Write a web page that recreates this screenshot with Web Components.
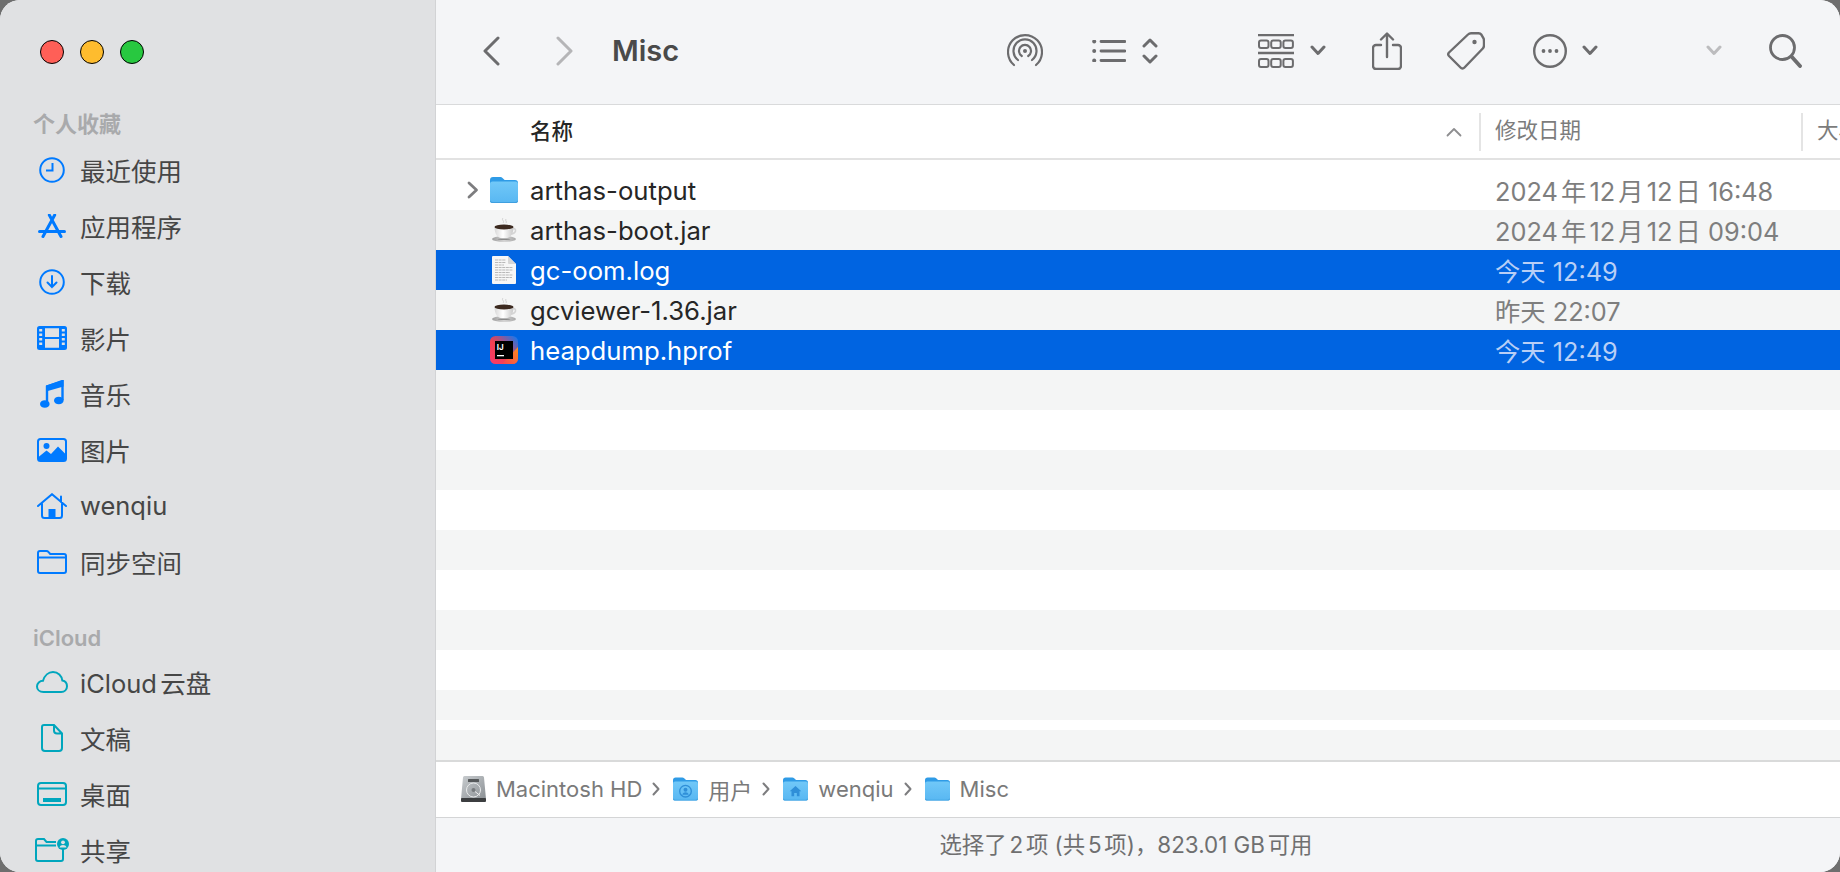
<!DOCTYPE html>
<html lang="zh">
<head>
<meta charset="utf-8">
<title>Misc</title>
<style>
  html, body { margin: 0; height: 100%; overflow: hidden; background: #6e6e6e; }
  body { font-family: Inter, "Noto Sans CJK SC", sans-serif; text-autospace: normal; }
</style>
</head>
<body>
<finder-window>
  <finder-sidebar slot="sidebar">
    <side-heading>个人收藏</side-heading>
    <side-item><finder-icon slot="icon" name="clock"></finder-icon>最近使用</side-item>
    <side-item><finder-icon slot="icon" name="apps"></finder-icon>应用程序</side-item>
    <side-item><finder-icon slot="icon" name="download"></finder-icon>下载</side-item>
    <side-item><finder-icon slot="icon" name="film"></finder-icon>影片</side-item>
    <side-item><finder-icon slot="icon" name="music"></finder-icon>音乐</side-item>
    <side-item><finder-icon slot="icon" name="photo"></finder-icon>图片</side-item>
    <side-item><finder-icon slot="icon" name="home"></finder-icon>wenqiu</side-item>
    <side-item><finder-icon slot="icon" name="sync"></finder-icon>同步空间</side-item>
    <side-heading second>iCloud</side-heading>
    <side-item><finder-icon slot="icon" name="cloud"></finder-icon>iCloud云盘</side-item>
    <side-item><finder-icon slot="icon" name="doc"></finder-icon>文稿</side-item>
    <side-item><finder-icon slot="icon" name="desktop"></finder-icon>桌面</side-item>
    <side-item><finder-icon slot="icon" name="shared"></finder-icon>共享</side-item>
  </finder-sidebar>

  <finder-toolbar slot="toolbar" title-text="Misc"></finder-toolbar>
  <list-header slot="content"></list-header>
  <file-list slot="content">
    <file-row height="40">
      <finder-icon slot="disclosure" name="disclosure"></finder-icon>
      <finder-icon slot="icon" name="folder"></finder-icon>
      <span slot="name">arthas-output</span>
      <span slot="date">2024年12月12日 16:48</span>
    </file-row>
    <file-row alt>
      <finder-icon slot="icon" name="cup"></finder-icon>
      <span slot="name">arthas-boot.jar</span>
      <span slot="date">2024年12月12日 09:04</span>
    </file-row>
    <file-row selected>
      <finder-icon slot="icon" name="log"></finder-icon>
      <span slot="name">gc-oom.log</span>
      <span slot="date">今天 12:49</span>
    </file-row>
    <file-row alt>
      <finder-icon slot="icon" name="cup"></finder-icon>
      <span slot="name">gcviewer-1.36.jar</span>
      <span slot="date">昨天 22:07</span>
    </file-row>
    <file-row selected>
      <finder-icon slot="icon" name="idea"></finder-icon>
      <span slot="name">heapdump.hprof</span>
      <span slot="date">今天 12:49</span>
    </file-row>
    <file-row alt></file-row>
    <file-row></file-row>
    <file-row alt></file-row>
    <file-row></file-row>
    <file-row alt></file-row>
    <file-row></file-row>
    <file-row alt></file-row>
    <file-row></file-row>
    <file-row alt height="30"></file-row>
    <file-row height="10"></file-row>
    <file-row alt height="30"></file-row>
  </file-list>
  <path-bar slot="content">
    <path-crumb><finder-icon slot="icon" name="drive"></finder-icon>Macintosh HD</path-crumb>
    <path-crumb><finder-icon slot="icon" name="crumbUser"></finder-icon>用户</path-crumb>
    <path-crumb><finder-icon slot="icon" name="crumbHome"></finder-icon>wenqiu</path-crumb>
    <path-crumb last><finder-icon slot="icon" name="crumbFolder"></finder-icon>Misc</path-crumb>
  </path-bar>
  <status-bar slot="content">选择了2项 (共5项)，823.01 GB可用</status-bar>
</finder-window>

<script>
'use strict'

const BLUE = '#007aff';
const TEAL = '#00a6bd';
const GREY = '#6c6c6e';

// Carpeta azul de Finder; el glifo va encima para las variantes de la barra de ruta.
const blueFolder = (w, h, glyph = '') => `
  <svg width="${w}" height="${h}" viewBox="0 0 28 26">
    <defs><linearGradient id="f" x1="0" y1="0" x2="0" y2="1"><stop offset="0" stop-color="#71c8f8"/><stop offset="1" stop-color="#58b7f2"/></linearGradient></defs>
    <path d="M0 3a3 3 0 0 1 3-3h7.5c.8 0 1.4.3 2 .9L14.600 3H25a3 3 0 0 1 3 3v4H0z" fill="#2f9be6"/>
    <path d="M0 7a2.500 2.500 0 0 1 2.500-2.500h23A2.500 2.500 0 0 1 28 7v16a3 3 0 0 1-3 3H3a3 3 0 0 1-3-3z" fill="url(#f)"/>
    <path d="M0 24.500V23a3 3 0 0 0 3 2h22a3 3 0 0 0 3-2v1.500a2 2 0 0 1-2 1.500H2a2 2 0 0 1-2-1.500z" fill="#3f9fdf"/>
    ${glyph}
  </svg>`;

// Iconos dibujados a mano en píxeles del original
const ICONS = {
  clock: `<svg width="26" height="26" viewBox="0 0 26 26" fill="none" stroke="${BLUE}" stroke-width="2"><circle cx="13" cy="13" r="11.800"/><path d="M13.500 6v7.500H7"/></svg>`,
  apps: `<svg width="28" height="24" viewBox="0 0 28 24" fill="none" stroke="${BLUE}" stroke-linecap="round"><path d="M11.300 1L23 22.500M16.700 1L5 22.500" stroke-width="3"/><path d="M1.500 17.500h25" stroke-width="3"/></svg>`,
  download: `<svg width="26" height="26" viewBox="0 0 26 26" fill="none" stroke="${BLUE}" stroke-width="2"><circle cx="13" cy="13" r="11.800"/><path d="M13 7v11M8.500 13.500l4.500 4.500 4.500-4.500" stroke-linecap="round"/></svg>`,
  film: `<svg width="30" height="24" viewBox="0 0 30 24"><rect width="30" height="24" rx="2.500" fill="${BLUE}"/><path d="M8 2.200h14v8.800H8zM8 13h14v8.800H8z" fill="#e0e1e3"/><path d="M2.200 3h3v2.500h-3zM2.200 7.500h3V10h-3zM2.200 12h3v2.500h-3zM2.200 16.500h3V19h-3zM24.800 3h3v2.500h-3zM24.800 7.500h3V10h-3zM24.800 12h3v2.500h-3zM24.800 16.500h3V19h-3z" fill="#e0e1e3"/></svg>`,
  music: `<svg width="24" height="28" viewBox="0 0 24 28"><path d="M7 24V6.500L22.500 1v19" fill="none" stroke="${BLUE}" stroke-width="2.400"/><path d="M6 5.500L23.500 0v6.500L6 11.500z" fill="${BLUE}"/><ellipse cx="4.800" cy="24" rx="4.800" ry="3.800" fill="${BLUE}"/><ellipse cx="18.800" cy="20.500" rx="4.800" ry="3.800" fill="${BLUE}"/></svg>`,
  photo: `<svg width="30" height="24" viewBox="0 0 30 24"><rect x="1" y="1" width="28" height="22" rx="2.500" fill="none" stroke="${BLUE}" stroke-width="2"/><circle cx="9.500" cy="8" r="3" fill="${BLUE}"/><path d="M1.500 19l8-6.500 4.500 3.500 7-7.500 7.500 7.500V23h-27z" fill="${BLUE}"/></svg>`,
  home: `<svg width="30" height="26" viewBox="0 0 30 26" fill="none" stroke="${BLUE}" stroke-width="2" stroke-linecap="round"><path d="M1 13L15 1.200 29 13M24 3.500v5.500M5 10.500V22.500a2.500 2.500 0 0 0 2.500 2.500h15a2.500 2.500 0 0 0 2.500-2.500V10.500"/><rect x="11.500" y="16" width="7" height="9" fill="${BLUE}" stroke="none"/></svg>`,
  sync: `<svg width="30" height="24" viewBox="0 0 30 24" fill="none" stroke="${BLUE}" stroke-width="2"><path d="M1 6.500V3a2 2 0 0 1 2-2h6.500c.9 0 1.500.4 2.100 1.100L13.200 4H27a2 2 0 0 1 2 2v15a2 2 0 0 1-2 2H3a2 2 0 0 1-2-2zM1 7.500h28"/></svg>`,
  cloud: `<svg width="32" height="22" viewBox="0 0 32 22" fill="none" stroke="${TEAL}" stroke-width="2"><path d="M7.500 21C3.500 21 1 18.500 1 15.500 1 12.200 3.700 9.800 7 9.800 8.500 4.500 12.500 1 17 1c5 0 8.800 3.600 9.300 8.500 2.800.6 4.700 3 4.700 5.800 0 3.300-2.500 5.700-5.800 5.700z"/></svg>`,
  doc: `<svg width="22" height="28" viewBox="0 0 22 28" fill="none" stroke="${TEAL}" stroke-width="2"><path d="M3 1h10l8 8.500V24a3 3 0 0 1-3 3H4a3 3 0 0 1-3-3V3a2 2 0 0 1 2-2zM13 1v5.500a3 3 0 0 0 3 3h5"/></svg>`,
  desktop: `<svg width="30" height="24" viewBox="0 0 30 24"><rect x="1" y="1" width="28" height="22" rx="3" fill="none" stroke="${TEAL}" stroke-width="2"/><path d="M1 6.500h28" stroke="${TEAL}" stroke-width="2"/><rect x="6" y="16" width="18" height="4" fill="${TEAL}"/></svg>`,
  shared: `<svg width="34" height="24" viewBox="0 0 34 24"><path d="M28 11v10a2 2 0 0 1-2 2H3a2 2 0 0 1-2-2V3a2 2 0 0 1 2-2h6l2.500 3H21M1 7.500h20" fill="none" stroke="${TEAL}" stroke-width="2"/><circle cx="28" cy="6" r="6" fill="${TEAL}"/><circle cx="28" cy="4.300" r="1.900" fill="#e0e1e3"/><path d="M24.500 9.500c.5-1.800 2-2.500 3.500-2.500s3 .7 3.500 2.500z" fill="#e0e1e3"/></svg>`,

  back: `<svg width="18" height="30" viewBox="0 0 18 30" fill="none" stroke="${GREY}" stroke-width="3" stroke-linecap="round" stroke-linejoin="round"><path d="M16 2L3 15l13 13"/></svg>`,
  forward: `<svg width="18" height="30" viewBox="0 0 18 30" fill="none" stroke="#b5b5b7" stroke-width="3" stroke-linecap="round" stroke-linejoin="round"><path d="M2 2l13 13L2 28"/></svg>`,
  airdrop: `<svg width="36" height="36" viewBox="0 0 36 36" fill="none" stroke="${GREY}" stroke-width="2.200" stroke-linecap="round"><path d="M7 32A17 17 0 1 1 29 32M11 27A11.500 11.500 0 1 1 25 27M14.800 23A6 6 0 1 1 21.200 23"/><circle cx="18" cy="18" r="2" fill="${GREY}" stroke="none"/></svg>`,
  list: `<svg width="34" height="22" viewBox="0 0 34 22" fill="none" stroke="${GREY}" stroke-width="2.800" stroke-linecap="round"><path d="M9 1.500h24M9 11h24M9 20.500h24"/><g fill="${GREY}" stroke="none"><circle cx="2.200" cy="1.500" r="2"/><circle cx="2.200" cy="11" r="2"/><circle cx="2.200" cy="20.500" r="2"/></g></svg>`,
  updown: `<svg width="16" height="26" viewBox="0 0 16 26" fill="none" stroke="${GREY}" stroke-width="3" stroke-linecap="round" stroke-linejoin="round"><path d="M2 8l6-6 6 6M2 18l6 6 6-6"/></svg>`,
  grid: `<svg width="36" height="34" viewBox="0 0 36 34" fill="none" stroke="${GREY}" stroke-width="2"><path d="M0 1h36M0 19h36" stroke-width="2.400"/><rect x="1" y="6.500" width="9.500" height="7.500" rx="2"/><rect x="13.200" y="6.500" width="9.500" height="7.500" rx="2"/><rect x="25.400" y="6.500" width="9.500" height="7.500" rx="2"/><rect x="1" y="25" width="9.500" height="8" rx="2"/><rect x="13.200" y="25" width="9.500" height="8" rx="2"/><rect x="25.400" y="25" width="9.500" height="8" rx="2"/></svg>`,
  chevron: `<svg width="16" height="11" viewBox="0 0 16 11" fill="none" stroke="${GREY}" stroke-width="3" stroke-linecap="round" stroke-linejoin="round"><path d="M2 2l6 6.500L14 2"/></svg>`,
  chevronOff: `<svg width="16" height="11" viewBox="0 0 16 11" fill="none" stroke="#bcbcbe" stroke-width="3" stroke-linecap="round" stroke-linejoin="round"><path d="M2 2l6 6.500L14 2"/></svg>`,
  share: `<svg width="30" height="38" viewBox="0 0 30 38" fill="none" stroke="${GREY}" stroke-width="2.400" stroke-linecap="round" stroke-linejoin="round"><path d="M9 13H4a3 3 0 0 0-3 3v18a3 3 0 0 0 3 3h22a3 3 0 0 0 3-3V16a3 3 0 0 0-3-3h-5M15 25V2M9 7.500l6-6 6 6"/></svg>`,
  tag: `<svg width="38" height="38" viewBox="0 0 38 38" fill="none" stroke="${GREY}" stroke-width="2.400" stroke-linejoin="round"><path d="M2 20.500L21 2.500c.8-.8 1.600-1.300 3-1.300h7.500c1.500 0 2.300.6 3 1.600l2 3.500c.5 1 .5 1.600.5 3v4c0 1.200-.3 2.300-1.200 3.200L17.500 35.500c-1.300 1.400-2.800 1.400-4 0L2 24c-1-1.100-1-2.400 0-3.500z"/><circle cx="27.500" cy="10" r="2.200" fill="${GREY}" stroke="none"/></svg>`,
  more: `<svg width="34" height="34" viewBox="0 0 34 34"><circle cx="17" cy="17" r="15.800" fill="none" stroke="${GREY}" stroke-width="2.400"/><g fill="${GREY}"><circle cx="10.500" cy="17" r="1.900"/><circle cx="17" cy="17" r="1.900"/><circle cx="23.500" cy="17" r="1.900"/></g></svg>`,
  search: `<svg width="33" height="34" viewBox="0 0 33 34" fill="none" stroke="${GREY}" stroke-linecap="round"><circle cx="13.500" cy="13.500" r="12" stroke-width="2.800"/><path d="M22.500 22.500L31 32" stroke-width="3.800"/></svg>`,
  sortUp: `<svg width="16" height="10" viewBox="0 0 16 10" fill="none" stroke="#8e8e90" stroke-width="1.800" stroke-linecap="round" stroke-linejoin="round"><path d="M1.500 8.500L8 2l6.500 6.500"/></svg>`,
  disclosure: `<svg width="14" height="18" viewBox="0 0 14 18" fill="none" stroke="#7d7d7f" stroke-width="2.800" stroke-linecap="round" stroke-linejoin="round"><path d="M3 2l7.500 7L3 16"/></svg>`,

  folder: blueFolder(28, 26),
  cup: `<svg width="26" height="26" viewBox="0 0 26 26">
    <defs>
      <linearGradient id="c" x1="0" y1="0" x2="1" y2="0"><stop offset="0" stop-color="#d8d8d8"/><stop offset=".45" stop-color="#fff"/><stop offset="1" stop-color="#c8c8c8"/></linearGradient>
      <linearGradient id="s" x1="0" y1="0" x2="1" y2="0"><stop offset="0" stop-color="#9d9d9d"/><stop offset=".5" stop-color="#d4d4d4"/><stop offset="1" stop-color="#a8a8a8"/></linearGradient>
    </defs>
    <path d="M12 1c-2 2 2 3 0 5M15 2c-1.500 1.500 1.500 2.500 0 4" fill="none" stroke="#d2d2d2" stroke-width="1"/>
    <ellipse cx="13" cy="22" rx="12" ry="3" fill="url(#s)"/>
    <path d="M20 12c3-1.500 5 0 4.500 2-.4 1.800-3 3-6 3" fill="none" stroke="#d4d4d4" stroke-width="1.600"/>
    <path d="M3.500 10c0 7 3 11.500 9.500 11.500S22.500 17 22.500 10z" fill="url(#c)"/>
    <ellipse cx="13" cy="10" rx="9.500" ry="2.400" fill="#3c2a20"/>
    <ellipse cx="13" cy="22.300" rx="6.500" ry=".8" fill="#8a8a8a"/>
  </svg>`,
  log: `<svg width="24" height="28" viewBox="0 0 24 28">
    <path d="M0 1a1 1 0 0 1 1-1h15l8 8v19a1 1 0 0 1-1 1H1a1 1 0 0 1-1-1z" fill="#f6f6f6"/>
    <path d="M16 0l8 8h-7a1 1 0 0 1-1-1z" fill="#d6d6d6"/>
    <path d="M3 4h11M3 6.500h11M3 9h9M3 11.500h18M3 14h18M3 16.500h15M3 19h18M3 21.500h17M3 24h12" stroke="#b8b8b8" stroke-width="1" stroke-dasharray="3 .6"/>
  </svg>`,
  idea: `<svg width="28" height="28" viewBox="0 0 28 28">
    <defs>
      <linearGradient id="i" x1="0" y1="1" x2="1" y2="0"><stop offset="0" stop-color="#fd3a6b"/><stop offset=".45" stop-color="#f0404f"/><stop offset="1" stop-color="#087cfa"/></linearGradient>
      <linearGradient id="o" x1="0" y1="1" x2="1" y2="0"><stop offset="0" stop-color="#f9414f"/><stop offset="1" stop-color="#fd8d1e"/></linearGradient>
    </defs>
    <rect width="28" height="28" rx="5.500" fill="url(#i)"/>
    <path d="M28 11v11.500a5.500 5.500 0 0 1-5.500 5.500H12z" fill="url(#o)"/>
    <rect x="5" y="5" width="18" height="18" fill="#000"/>
    <text x="6.800" y="13.500" font-family="Inter, sans-serif" font-size="8" font-weight="700" fill="#fff">IJ</text>
    <rect x="7" y="19" width="7" height="1.300" fill="#fff"/>
  </svg>`,
  drive: `<svg width="25" height="26" viewBox="0 0 25 26">
    <defs><linearGradient id="d" x1="0" y1="0" x2="1" y2="1"><stop offset="0" stop-color="#c9cdd0"/><stop offset="1" stop-color="#8b9094"/></linearGradient></defs>
    <path d="M2 1.500A1.500 1.500 0 0 1 3.500 0h18A1.500 1.500 0 0 1 23 1.500L25 23H0z" fill="url(#d)"/>
    <rect x="0" y="22" width="25" height="4" rx="1" fill="#3c3e40"/>
    <rect x="7" y="3" width="11" height="3" rx=".5" fill="#55585a"/>
    <circle cx="12.500" cy="14" r="7" fill="none" stroke="#e8eaeb" stroke-width="1"/>
    <circle cx="12.500" cy="14" r="2" fill="#777b7e"/>
    <path d="M14 15.500l5 4" stroke="#eee" stroke-width="1"/>
  </svg>`,
  crumbUser: blueFolder(25, 24, `<circle cx="14" cy="15.500" r="6.500" fill="none" stroke="#2f8fd8" stroke-width="1.500"/><circle cx="14" cy="13.800" r="2.200" fill="#2f8fd8"/><path d="M10.500 19.500c.6-2 2-2.800 3.500-2.800s2.900.8 3.500 2.800z" fill="#2f8fd8"/>`),
  crumbHome: blueFolder(25, 24, `<path d="M14 9.500l6.500 6h-2v5.500h-3v-3.500h-3V21h-3v-5.500h-2z" fill="#2f8fd8"/>`),
  crumbFolder: blueFolder(25, 24)
};

// Elemento base: monta el shadow root con el marcado que devuelve template()
class FinderElement extends HTMLElement {
    constructor() {
        super();
        this.attachShadow({ mode: 'open' });
    }

    connectedCallback() {
        this.shadowRoot.innerHTML = this.template();
    }
}

class FinderIcon extends FinderElement {
    template() {
        return `<style>:host { display: inline-flex; flex: none; line-height: 0; } svg { display: block; }</style>${ICONS[this.getAttribute('name')] || ''}`;
    }
}

class FinderWindow extends FinderElement {
    template() {
        return `
        <style>
            :host {
                display: grid;
                grid-template-columns: 436px 1fr;
                grid-template-rows: 105px 1fr;
                height: 872px;
                border-radius: 20px;
                overflow: hidden;
                background: #f4f5f7;
            }
            ::slotted([slot=sidebar]) { grid-row: 1 / 3; }
            main { display: flex; flex-direction: column; min-height: 0; min-width: 0; }
        </style>
        <slot name="sidebar"></slot>
        <slot name="toolbar"></slot>
        <main><slot name="content"></slot></main>`;
    }
}

class FinderSidebar extends FinderElement {
    template() {
        return `
        <style>
            :host {
                display: block;
                box-sizing: border-box;
                background: #e0e1e3;
                border-right: 1px solid #d2d3d5;
                padding: 40px 0 0 28px;
                overflow: hidden;
            }
            .lights { display: flex; gap: 16px; margin-left: 12px; margin-bottom: 45px; }
            .lights span { width: 24px; height: 24px; border-radius: 50%; box-sizing: border-box; border: 1px solid; }
            .close { background: #ff5f57; border-color: #e0443e; }
            .min { background: #febc2e; border-color: #dea123; }
            .max { background: #28c840; border-color: #1fab34; }
        </style>
        <div class="lights"><span class="close"></span><span class="min"></span><span class="max"></span></div>
        <slot></slot>`;
    }
}

class SideHeading extends FinderElement {
    template() {
        return `
        <style>
            :host {
                display: block;
                height: 30px;
                line-height: 30px;
                margin: 0 0 3px 5px;
                font-size: 22px;
                font-weight: 600;
                color: #a9aaac;
            }
            :host([second]) { margin-top: 33px; margin-bottom: 1px; }
        </style>
        <slot></slot>`;
    }
}

class SideItem extends FinderElement {
    template() {
        return `
        <style>
            :host {
                display: flex;
                align-items: center;
                height: 56px;
                font-size: 25.500px;
                color: #464646;
                white-space: nowrap;
            }
            .icon { width: 48px; margin-right: 4px; display: flex; justify-content: center; flex: none; }
            .label { padding-bottom: 1px; }
        </style>
        <div class="icon"><slot name="icon"></slot></div>
        <div class="label"><slot></slot></div>`;
    }
}

class FinderToolbar extends FinderElement {
    template() {
        // Cada entrada: icono y margen izquierdo hasta el anterior
        const tools = [
            ['airdrop', 0], ['list', 49], ['updown', 16], ['grid', 100], ['chevron', 16], ['share', 46],
            ['tag', 45], ['more', 48], ['chevron', 15], ['chevronOff', 108], ['search', 47]
        ];
        const items = tools.map(([name, gap]) => `<finder-icon name="${name}" style="margin-left:${gap}px"></finder-icon>`).join('');
        return `
        <style>
            :host {
                display: flex;
                align-items: center;
                box-sizing: border-box;
                height: 105px;
                padding: 0 0 3px 46px;
                background: #f4f5f7;
                border-bottom: 1px solid #d9dadb;
                overflow: hidden;
            }
            .nav { display: flex; gap: 56px; }
            h1 {
                margin: 0 0 0 38px;
                flex: 0 0 395px;
                font-size: 29px;
                font-weight: 600;
                color: #4a4a4a;
            }
        </style>
        <div class="nav"><finder-icon name="back"></finder-icon><finder-icon name="forward"></finder-icon></div>
        <h1>${this.getAttribute('title-text')}</h1>
        ${items}`;
    }
}

class ListHeader extends FinderElement {
    template() {
        return `
        <style>
            :host {
                display: grid;
                grid-template-columns: 1043px 322px 1fr;
                align-items: center;
                box-sizing: border-box;
                height: 55px;
                flex: none;
                background: #fff;
                border-bottom: 2px solid #e2e2e2;
                font-size: 21.500px;
                color: #7c7c7c;
                overflow: hidden;
                white-space: nowrap;
            }
            .name { display: flex; align-items: center; justify-content: space-between; padding: 0 17px 0 94px; }
            .name b { font-weight: 500; color: #262626; margin-bottom: 4px; }
            .col { height: 38px; line-height: 34px; border-left: 2px solid #e4e4e4; padding-left: 14px; }
        </style>
        <div class="name"><b>名称</b><finder-icon name="sortUp"></finder-icon></div>
        <div class="col">修改日期</div>
        <div class="col">大小</div>`;
    }
}

class FileList extends FinderElement {
    template() {
        return `
        <style>
            :host { display: block; flex: 1; min-height: 0; padding-top: 10px; background: #fff; overflow: hidden; }
        </style>
        <slot></slot>`;
    }
}

class FileRow extends FinderElement {
    template() {
        const height = this.getAttribute('height') || 40;
        return `
        <style>
            :host {
                display: grid;
                grid-template-columns: 54px 40px 965px 1fr;
                align-items: center;
                height: ${height}px;
                font-size: 25.700px;
                color: #262626;
                white-space: nowrap;
            }
            :host([alt]) { background: #f4f5f5; }
            :host([selected]) { background: #0064e1; color: #fff; }
            .disclosure { padding-left: 30px; display: flex; }
            .icon { display: flex; width: 28px; justify-content: center; }
            .date { color: #7e7e7e; font-size: 25.300px; padding-bottom: 1px; }
            :host([selected]) .date { color: #b9cff6; }
        </style>
        <div class="disclosure"><slot name="disclosure"></slot></div>
        <div class="icon"><slot name="icon"></slot></div>
        <div><slot name="name"></slot></div>
        <div class="date"><slot name="date"></slot></div>`;
    }
}

class PathBar extends FinderElement {
    template() {
        return `
        <style>
            :host {
                display: flex;
                align-items: center;
                flex: none;
                box-sizing: border-box;
                height: 58px;
                padding: 0 0 2px 25px;
                background: #fff;
                border-top: 2px solid #d9dada;
                border-bottom: 1px solid #d4d5d6;
            }
        </style>
        <slot></slot>`;
    }
}

class PathCrumb extends FinderElement {
    template() {
        return `
        <style>
            :host {
                display: flex;
                align-items: center;
                gap: 10px;
                font-size: 22px;
                color: #7a7a7a;
                white-space: nowrap;
            }
            svg { margin: 0 13px 0 0; }
            :host([last]) svg { display: none; }
        </style>
        <slot name="icon"></slot><slot></slot>
        <svg width="8" height="14" viewBox="0 0 8 14" fill="none" stroke="#7d7d7f" stroke-width="2" stroke-linecap="round" stroke-linejoin="round"><path d="M1.500 1.500L6.500 7l-5 5.500"/></svg>`;
    }
}

class StatusBar extends FinderElement {
    template() {
        return `
        <style>
            :host {
                display: flex;
                align-items: center;
                justify-content: center;
                flex: none;
                height: 54px;
                padding: 0 24px 4px 0;
                box-sizing: border-box;
                background: #f4f5f7;
                font-size: 22.400px;
                color: #6f6f70;
            }
        </style>
        <slot></slot>`;
    }
}

customElements.define('finder-icon', FinderIcon);
customElements.define('finder-window', FinderWindow);
customElements.define('finder-sidebar', FinderSidebar);
customElements.define('side-heading', SideHeading);
customElements.define('side-item', SideItem);
customElements.define('finder-toolbar', FinderToolbar);
customElements.define('list-header', ListHeader);
customElements.define('file-list', FileList);
customElements.define('file-row', FileRow);
customElements.define('path-bar', PathBar);
customElements.define('path-crumb', PathCrumb);
customElements.define('status-bar', StatusBar);
</script>
</body>
</html>
